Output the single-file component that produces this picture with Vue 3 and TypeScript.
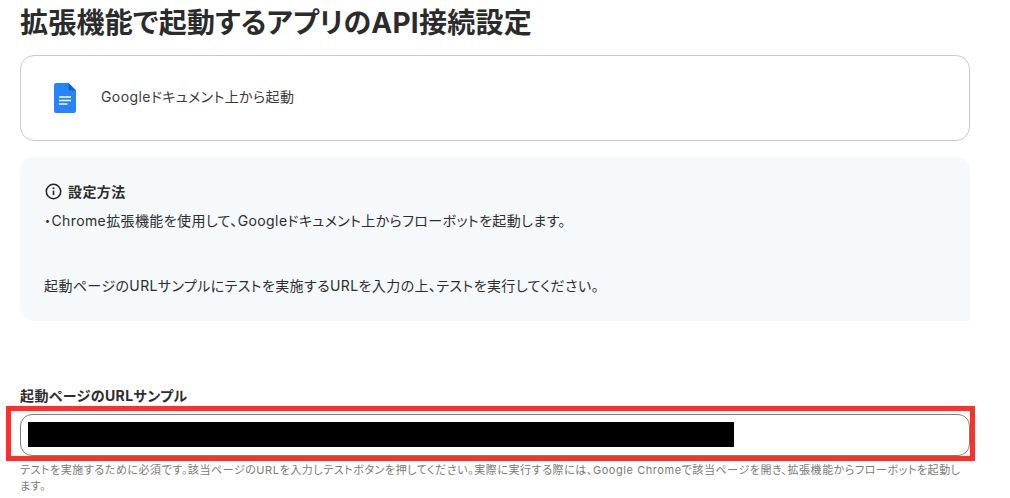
<script setup lang="ts">
const helpText = 'テストを実施するために必須です。該当ページのURLを入力しテストボタンを押してください。実際に実行する際には、Google Chromeで該当ページを開き、拡張機能からフローボットを起動します。'
</script>

<template>
  <main class="page">
    <h1 class="title">拡張機能で起動するアプリのAPI接続設定</h1>
    <section class="app-card">
      <svg class="doc" width="22" height="30" viewBox="0 0 22 30" aria-hidden="true">
        <path d="M2 0H14.5L22 7.5V28a2 2 0 0 1-2 2H2a2 2 0 0 1-2-2V2a2 2 0 0 1 2-2Z" fill="#2684fc" />
        <path d="M14.5 0L22 7.5H16.5a2 2 0 0 1-2-2Z" fill="#0f5fd0" />
        <path d="M5 14H17M5 17.5H17M5 21H13.5" stroke="#fff" stroke-width="1.5" fill="none" />
      </svg>
      <span class="app-name">Googleドキュメント上から起動</span>
    </section>
    <section class="info">
      <div class="info-head">
        <svg width="17" height="17" viewBox="0 0 17 17" aria-hidden="true">
          <circle cx="8.5" cy="8.5" r="7.2" fill="none" stroke="#222" stroke-width="1.5" />
          <circle cx="8.5" cy="5.2" r="1" fill="#222" />
          <path d="M8.5 7.6V12.2" stroke="#222" stroke-width="1.6" />
        </svg>
        <strong>設定方法</strong>
      </div>
      <p class="line first">・Chrome拡張機能を使用して、Googleドキュメント上からフローボットを起動します。</p>
      <p class="line second">起動ページのURLサンプルにテストを実施するURLを入力の上、テストを実行してください。</p>
    </section>
    <section class="field">
      <label class="label">起動ページのURLサンプル</label>
      <div class="input-wrap">
        <div class="input"><div class="redact"></div></div>
        <div class="highlight"></div>
      </div>
      <p class="help">{{ helpText }}</p>
    </section>
  </main>
</template>

<style>
html, body { margin: 0; background: #fff; overflow: hidden; }
</style>

<style scoped>
.page {
  width: 950px;
  height: 498px;
  padding-left: 20px;
  font-family: Inter, "Noto Sans CJK JP", sans-serif;
  font-feature-settings: "palt";
  letter-spacing: 0.4px;
  color: #2d2d2d;
}
.title {
  margin: 0;
  height: 55px;
  font-size: 28px;
  line-height: 46px;
  font-weight: 700;
  letter-spacing: 0.25px;
  color: #2b2b2b;
  white-space: nowrap;
}
.app-card {
  box-sizing: border-box;
  height: 86px;
  display: flex;
  align-items: center;
  gap: 25px;
  padding-left: 33px;
  border: 1px solid #c9c9cd;
  border-radius: 14px;
}
.doc { flex: none; margin-top: -1px; }
.app-name { font-size: 14px; line-height: 20px; margin-top: -2px; color: #3a3a3a; }
.info {
  box-sizing: border-box;
  height: 164px;
  margin-top: 16px;
  padding: 25px 24px 0;
  background: #f5f9fc;
  border-radius: 14px 14px 0 14px;
  font-size: 14px;
}
.info-head {
  display: flex;
  align-items: center;
  gap: 6px;
  height: 18px;
  margin-left: 1px;
  font-size: 14px;
}
.info-head strong { font-weight: 700; }
.line { margin: 0; line-height: 20px; white-space: nowrap; }
.first { margin-top: 11px; }
.second { margin-top: 45px; }
.field { margin-top: 65px; }
.label {
  display: block;
  font-size: 14px;
  font-weight: 700;
  line-height: 20px;
}
.input-wrap { position: relative; margin-top: 8px; }
.input {
  box-sizing: border-box;
  height: 42px;
  padding: 7px;
  background: #fff;
  border: 1px solid #7d7d7d;
  border-radius: 12px;
}
.redact { width: 706px; height: 25px; background: #000; }
.highlight {
  position: absolute;
  left: -14px;
  top: -8px;
  width: 969px;
  height: 55px;
  box-sizing: border-box;
  border: 5px solid #ff3126;
}
.help {
  margin: 6px 0 0;
  font-size: 11px;
  line-height: 16px;
  letter-spacing: 0.56px;
  color: #7a7a7a;
}
</style>
